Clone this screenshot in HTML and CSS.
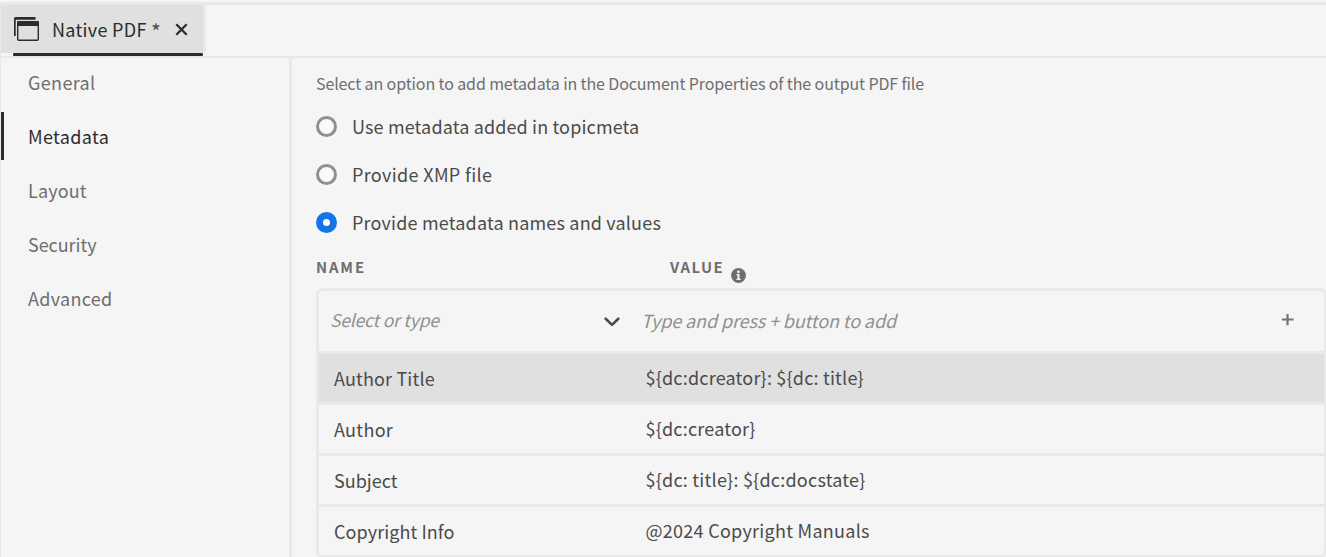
FILE: index.html
```html
<!DOCTYPE html>
<html lang="en">
<head>
<meta charset="utf-8">
<title>Native PDF</title>
<link rel="stylesheet" href="styles.css">
</head>
<body>
<div class="app">
  <header class="tabs">
    <div class="tab">
      <div class="tab-body">
        <svg class="tab-icon" width="25" height="24" viewBox="0 0 25 24"><path d="M0 19V1.500Q0 0 1.500 0H21.500V2.700H1.700V19Z" fill="#2c2c2c"/><rect x="3.700" y="4.700" width="20.600" height="18.600" rx="1" fill="#e0e0e0" stroke="#2c2c2c" stroke-width="1.400"/><path d="M3 5Q3 4 4 4H24Q25 4 25 5V9H3Z" fill="#2c2c2c"/></svg>
        <span class="tab-title">Native PDF <span class="star">*</span></span>
        <svg class="tab-close" width="13" height="13" viewBox="0 0 13 13"><path d="M1.300 1.300L11.700 11.700M11.700 1.300L1.300 11.700" stroke="#2c2c2c" stroke-width="2.300"/></svg>
      </div>
      <div class="tab-line"></div>
    </div>
  </header>
  <div class="main">
    <nav class="side">
      <a class="item i1">General</a>
      <a class="item i2 active">Metadata</a>
      <a class="item i3">Layout</a>
      <a class="item i4">Security</a>
      <a class="item i5">Advanced</a>
    </nav>
    <section class="content">
      <p class="desc">Select an option to add metadata in the Document Properties of the output PDF file</p>
      <div class="radio"><i class="dot"></i><span class="r1">Use metadata added in topicmeta</span></div>
      <div class="radio"><i class="dot"></i><span class="r2">Provide XMP file</span></div>
      <div class="radio"><i class="dot on"></i><span class="r3">Provide metadata names and values</span></div>
      <div class="heads">
        <span class="head-name">NAME</span>
        <span class="head-value">VALUE</span>
        <svg class="info" width="15" height="15" viewBox="0 0 15 15"><circle cx="7.500" cy="7.500" r="7.400" fill="#6e6e6e"/><circle cx="7.400" cy="3.800" r="1.400" fill="#f5f5f5"/><path d="M5.500 6H8.500V10.800H9.600V12H5.500V10.800H6.500V7.200H5.500Z" fill="#f5f5f5"/></svg>
      </div>
      <div class="table">
        <div class="row entry">
          <span class="name">Select or type</span>
          <svg class="chev" width="16" height="10" viewBox="0 0 16 10"><path d="M1.700 1.700L8 7.900L14.300 1.700" fill="none" stroke="#4b4b4b" stroke-width="2.600" stroke-linecap="round" stroke-linejoin="round"/></svg>
          <span class="value">Type and press + button to add</span>
          <svg class="plus" width="12" height="12" viewBox="0 0 12 12"><path d="M0 5.500H11.500M5.500 0V11.300" stroke="#747474" stroke-width="2.200"/></svg>
        </div>
        <div class="row selected"><span class="name n1">Author Title</span><span class="value v1">${dc:dcreator}: ${dc: title}</span></div>
        <div class="row"><span class="name n2">Author</span><span class="value v2">${dc:creator}</span></div>
        <div class="row"><span class="name n3">Subject</span><span class="value v3">${dc: title}: ${dc:docstate}</span></div>
        <div class="row"><span class="name n4">Copyright Info</span><span class="value v4">@2024 Copyright Manuals</span></div>
      </div>
    </section>
  </div>
</div>
</body>
</html>
```

FILE: styles.css
```css
* { box-sizing: border-box; }
body {
  margin: 0;
  height: 557px;
  overflow: hidden;
  background: #f5f5f5;
  color: #4b4b4b;
  font: 18px/24px "Noto Sans CJK SC", "Open Sans", sans-serif;
  white-space: nowrap;
}
.app { height: 557px; padding-top: 2px; overflow: hidden; }
.tabs {
  height: 56px;
  border-top: 3px solid #e9e9e9;
  border-bottom: 2px solid #e9e9e9;
  border-left: 1px solid #e9e9e9;
}
.tab { width: 205px; }
.tab-body {
  display: flex;
  height: 48px;
  padding-left: 13px;
  background: #e0e0e0;
  border-right: 3px solid #e9e9e9;
}
.tab-icon { margin-top: 12px; flex: none; }
.tab-title { width: 123px; margin: 12px 0 0 13px; color: #2c2c2c; letter-spacing: 0.300px; }
.star { font-size: 21px; line-height: 20px; vertical-align: -3px; color: #4b4b4b; }
.tab-close { margin-top: 18px; flex: none; }
.tab-line { width: 190px; height: 3px; margin-left: 12px; background: #2c2c2c; border-radius: 1px; }
.main { display: flex; height: 499px; border-left: 1px solid #e9e9e9; }
.side {
  display: flex;
  flex-direction: column;
  gap: 6px;
  width: 291px;
  flex: none;
  border-right: 3px solid #e9e9e9;
}
.item { height: 48px; line-height: 48px; padding-left: 27px; color: #6e6e6e; }
.item.active { padding-left: 24px; border-left: 3px solid #2c2c2c; color: #2c2c2c; }
.i1, .i2 { letter-spacing: 0.350px; }
.i3 { letter-spacing: 0.150px; }
.i4 { letter-spacing: -0.050px; }
.i5 { letter-spacing: 0.300px; }
.content { padding-left: 24px; width: 1035px; flex: none; }
.desc { margin: 13px 0 19px; font-size: 16px; line-height: 24px; letter-spacing: -0.120px; color: #6e6e6e; }
.radio { display: flex; height: 24px; margin-bottom: 24px; }
.r1 { letter-spacing: 0.140px; }
.r2 { letter-spacing: 0.340px; }
.r3 { letter-spacing: 0.180px; }
.dot { width: 21px; height: 21px; margin: 2px 15px 0 0; border: 3px solid #909090; border-radius: 50%; background: #fafafa; }
.dot.on { border: 7px solid #1473e6; background: #fff; }
.heads { display: flex; height: 33px; margin-top: -3px; font-size: 14.800px; font-weight: 700; color: #6e6e6e; }
.head-name { width: 354px; letter-spacing: 1.900px; }
.head-value { width: 61px; letter-spacing: 1.550px; }
.info { margin-top: 13px; flex: none; }
.table { width: 1011px; border: 3px solid #e9e9e9; border-radius: 7px; }
.row { display: flex; height: 51px; padding-left: 15px; line-height: 46px; border-bottom: 3px solid #e9e9e9; }
.row:last-child { height: 48px; border-bottom: 0; }
.name { width: 311.500px; padding-top: 1px; }
.n1 { letter-spacing: 0.150px; }
.n2 { letter-spacing: 0.300px; }
.n4 { letter-spacing: 0.070px; }
.v1, .v2 { letter-spacing: 0.200px; }
.v3 { letter-spacing: 0.230px; }
.v4 { letter-spacing: 0.270px; }
.selected { background: #e0e0e0; background-clip: padding-box; }
.entry { height: 63px; padding-left: 11px; line-height: 58px; font-style: italic; color: #909090; }
.entry .name { width: 273.500px; padding: 0; font-size: 17.500px; letter-spacing: -0.200px; }
.chev { margin: 26px 21.500px 0 0; flex: none; }
.entry .value { width: 641px; letter-spacing: -0.120px; }
.plus { margin-top: 23px; flex: none; }
```
